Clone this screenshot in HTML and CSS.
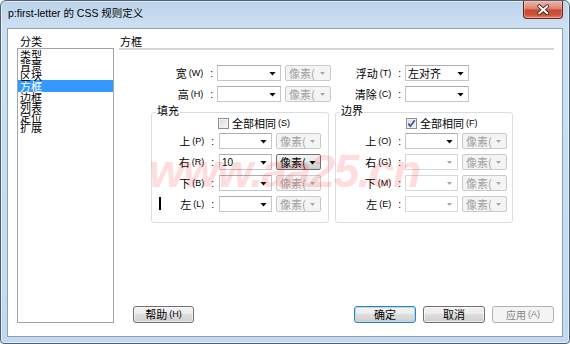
FILE: index.html
```html
<!DOCTYPE html>
<html lang="zh-CN">
<head>
<meta charset="utf-8">
<title>p:first-letter 的 CSS 规则定义</title>
<link rel="stylesheet" href="styles.css">
</head>
<body>
<div class="window">
  <div class="titlebar">
    <div class="title">p:first-letter 的 CSS 规则定义</div>
    <div class="close">
      <svg width="40" height="17" viewBox="0 0 40 17">
        <path d="M16 5 L24.5 12.5 M24.5 5 L16 12.5" stroke="#4a1810" stroke-width="4" stroke-linecap="round"/>
        <path d="M16 5 L24.5 12.5 M24.5 5 L16 12.5" stroke="#ffffff" stroke-width="2.2" stroke-linecap="round"/>
      </svg>
    </div>
  </div>
  <div class="client">
    <div class="cat">
      <div class="cat-label">分类</div>
      <ul class="cat-list">
        <li>类型</li>
        <li>背景</li>
        <li>区块</li>
        <li class="sel">方框</li>
        <li>边框</li>
        <li>列表</li>
        <li>定位</li>
        <li>扩展</li>
      </ul>
    </div>
    <div class="panel">
      <div class="panel-title">方框</div>
      <div class="size-grid">
        <div class="lbl">宽<span class="k">(W)</span><span class="c">:</span></div>
        <div class="combo"><span class="val"></span><i class="arr"></i></div>
        <div class="unit off"><span class="u">像素(</span><i class="arr"></i></div>
        <div class="lbl">浮动<span class="k">(T)</span><span class="c">:</span></div>
        <div class="combo"><span class="val">左对齐</span><i class="arr"></i></div>

        <div class="lbl">高<span class="k">(H)</span><span class="c">:</span></div>
        <div class="combo"><span class="val"></span><i class="arr"></i></div>
        <div class="unit off"><span class="u">像素(</span><i class="arr"></i></div>
        <div class="lbl">清除<span class="k">(C)</span><span class="c">:</span></div>
        <div class="combo"><span class="val"></span><i class="arr"></i></div>
      </div>

      <div class="groups">
        <div class="group padding">
          <div class="legend">填充</div>
          <div class="same"><span class="cb"></span>全部相同<span class="k">(S)</span></div>
          <div class="side-grid">
            <div class="lbl">上<span class="k">(P)</span><span class="c">:</span></div>
            <div class="combo"><span class="val"></span><i class="arr"></i></div>
            <div class="unit off"><span class="u">像素(</span><i class="arr"></i></div>

            <div class="lbl">右<span class="k">(R)</span><span class="c">:</span></div>
            <div class="combo"><span class="val num">10</span><i class="arr"></i></div>
            <div class="unit on"><span class="u">像素(</span><i class="arr"></i></div>

            <div class="lbl">下<span class="k">(B)</span><span class="c">:</span></div>
            <div class="combo"><span class="val"></span><i class="arr"></i></div>
            <div class="unit off"><span class="u">像素(</span><i class="arr"></i></div>

            <div class="lbl">左<span class="k">(L)</span><span class="c">:</span></div>
            <div class="combo"><span class="val"></span><i class="arr"></i></div>
            <div class="unit off"><span class="u">像素(</span><i class="arr"></i></div>
          </div>
        </div>

        <div class="group margin">
          <div class="legend">边界</div>
          <div class="same"><span class="cb checked"><svg width="9" height="9" viewBox="0 0 9 9"><path d="M1.3 4.6 L3.4 7.2 L7.8 1.2" fill="none" stroke="#2f55a8" stroke-width="1.7"/></svg></span>全部相同<span class="k">(F)</span></div>
          <div class="side-grid">
            <div class="lbl">上<span class="k">(O)</span><span class="c">:</span></div>
            <div class="combo"><span class="val"></span><i class="arr"></i></div>
            <div class="unit off"><span class="u">像素(</span><i class="arr"></i></div>

            <div class="lbl">右<span class="k">(G)</span><span class="c">:</span></div>
            <div class="combo off"><span class="val"></span><i class="arr"></i></div>
            <div class="unit off"><span class="u">像素(</span><i class="arr"></i></div>

            <div class="lbl">下<span class="k">(M)</span><span class="c">:</span></div>
            <div class="combo off"><span class="val"></span><i class="arr"></i></div>
            <div class="unit off"><span class="u">像素(</span><i class="arr"></i></div>

            <div class="lbl">左<span class="k">(E)</span><span class="c">:</span></div>
            <div class="combo off"><span class="val"></span><i class="arr"></i></div>
            <div class="unit off"><span class="u">像素(</span><i class="arr"></i></div>
          </div>
        </div>
      </div>

      <div class="buttons">
        <button class="btn help">帮助<span class="k">(H)</span></button>
        <span class="spacer"></span>
        <button class="btn default">确定</button>
        <button class="btn">取消</button>
        <button class="btn" disabled>应用<span class="k">(A)</span></button>
      </div>
    </div>
  </div>
  <div class="watermark">www.aa25.cn</div>
  <div class="ibeam"></div>
</div>
</body>
</html>
```

FILE: styles.css
```css
* { box-sizing: border-box; }
html, body { margin: 0; padding: 0; }
body {
  width: 570px;
  height: 344px;
  overflow: hidden;
  background: #fff;
  font-family: "Noto Sans CJK SC", "Liberation Sans", sans-serif;
  font-size: 11px;
  color: #000;
}

.window {
  position: relative;
  width: 570px;
  height: 344px;
  border: 1px solid #4f6172;
  border-radius: 6px 6px 4px 4px;
  background: linear-gradient(#bcd3eb, #cde0f3 26px, #c4d9ef);
  box-shadow: inset 0 0 0 1px rgba(255, 255, 255, 0.55);
  display: flex;
  flex-direction: column;
  overflow: hidden;
}

.titlebar {
  height: 27px;
  flex: none;
  display: flex;
  align-items: flex-start;
  padding-left: 7px;
}
.title {
  margin-top: 4px;
  line-height: 16px;
  font-family: "Liberation Sans", "Noto Sans CJK SC", sans-serif;
  font-size: 10.5px;
  white-space: nowrap;
}
.close {
  margin-left: auto;
  margin-right: 6px;
  width: 40px;
  height: 18px;
  border: 1px solid #6a2118;
  border-top: 0;
  border-radius: 0 0 4px 4px;
  background: linear-gradient(#ebb4a8, #dc8a77 42%, #c84a33 55%, #cd5339 82%, #e38c73);
  box-shadow: inset 0 0 0 1px rgba(255, 220, 210, 0.35);
  display: flex;
}

.client {
  flex: 1;
  margin: 0 6px 6px;
  border: 1px solid #8b9fb5;
  background: #fff;
  display: flex;
  column-gap: 5px;
  padding: 6px 8px 13px 9px;
}

.cat {
  width: 97px;
  flex: none;
  display: flex;
  flex-direction: column;
}
.cat-label {
  height: 13px;
  line-height: 13px;
  padding-left: 3px;
}
.cat-list {
  flex: 1;
  margin: 0;
  padding: 1px 0 0;
  list-style: none;
  border: 1px solid #a0a6ae;
}
.cat-list li {
  height: 10px;
  line-height: 10px;
  padding-left: 2px;
  white-space: nowrap;
}
.cat-list li.sel {
  height: 12px;
  line-height: 12px;
  background: #3399ff;
  color: #fff;
}

.panel {
  flex: 1;
  display: flex;
  flex-direction: column;
}
.panel-title {
  height: 15px;
  line-height: 13px;
  padding-left: 1px;
  border-bottom: 2px solid #d6d6d6;
}

.size-grid {
  margin-top: 15px;
  display: grid;
  grid-template-columns: 98px 64px 50px 74px 64px;
  grid-auto-rows: 16px;
  row-gap: 5px;
}

.lbl {
  display: flex;
  align-items: center;
  justify-content: flex-end;
  padding-right: 4px;
  white-space: nowrap;
}
.k {
  font-family: "Liberation Sans", sans-serif;
  font-size: 9px;
  margin-left: 2px;
}
.c {
  font-family: "Liberation Sans", sans-serif;
  font-size: 10px;
  margin-left: 7px;
}

.combo {
  display: flex;
  align-items: center;
  border: 1px solid #c4c6cb;
  border-top-color: #abadb3;
  background: #fff;
  padding-left: 2px;
}
.val {
  flex: 1;
  white-space: nowrap;
}
.val.num {
  font-family: "Liberation Sans", sans-serif;
  font-size: 10px;
}
.arr {
  flex: none;
  width: 7px;
  height: 4px;
  margin: 1px 4px 0 0;
  background: #000;
  clip-path: polygon(0 0, 100% 0, 50% 100%);
}
.combo.off {
  border-color: #d6d7da;
}
.combo.off .arr,
.unit.off .arr {
  width: 5px;
  height: 3px;
  margin-right: 5px;
  background: #a8a8a8;
}

.unit {
  margin-left: 4px;
  display: flex;
  align-items: center;
  padding-left: 3px;
  border-radius: 2px;
  white-space: nowrap;
}
.unit .u { flex: 1; }
.unit.off {
  border: 1px solid #c8cacd;
  background: #f4f4f4;
  color: #a2a2a2;
}
.unit.on {
  border: 1px solid #707070;
  background: linear-gradient(#f3f3f3, #ebebeb 50%, #dddddd 50%, #cfcfcf);
}

.groups {
  margin-top: 10px;
  margin-left: 32px;
  display: flex;
  column-gap: 6px;
}
.group {
  width: 178px;
  border: 1px solid #d5dfe5;
  border-radius: 3px;
  padding-bottom: 10px;
}
.legend {
  width: max-content;
  height: 12px;
  line-height: 12px;
  margin: -9px 0 0 4px;
  padding: 0 1px;
  background: #fff;
}
.same {
  margin-top: 2px;
  height: 11px;
  line-height: 11px;
  display: flex;
  align-items: center;
  padding-left: 66px;
  white-space: nowrap;
}
.cb {
  flex: none;
  width: 11px;
  height: 11px;
  margin-right: 3px;
  border: 1px solid #8e8f8f;
  background: linear-gradient(135deg, #d9d9d9, #f8f8f8);
  box-shadow: inset 0 0 0 1px #f2f2f2;
  display: flex;
  align-items: center;
  justify-content: center;
}
.side-grid {
  margin-top: 4px;
  display: grid;
  grid-template-columns: 67px 53px 49px;
  grid-auto-rows: 16px;
  row-gap: 5px;
}
.group.padding .lbl { padding-right: 5px; }
.group.margin .same { padding-left: 70px; }
.group.margin .side-grid { grid-template-columns: 69px 53px 49px; }

.buttons {
  margin-top: auto;
  height: 17px;
  display: flex;
  padding-left: 14px;
}
.spacer { flex: 1; }
.btn {
  width: 62px;
  height: 17px;
  margin: 0;
  padding: 0;
  font-family: "Noto Sans CJK SC", sans-serif;
  font-size: 11px;
  line-height: 1;
  color: #000;
  border: 1px solid #707070;
  border-radius: 3px;
  background: linear-gradient(#f3f3f3, #ebebeb 50%, #dddddd 50%, #cfcfcf);
  box-shadow: inset 0 0 0 1px rgba(255, 255, 255, 0.6);
  display: flex;
  align-items: center;
  justify-content: center;
}
.btn.help { width: 61px; }
.btn + .btn { margin-left: 7px; }
.btn.default {
  border-color: #3c7fb1;
  box-shadow: inset 0 0 0 1px #a9dcf6;
}
.btn:disabled {
  border-color: #adb2b5;
  background: #f4f4f4;
  box-shadow: none;
  color: #838383;
  font-size: 10px;
}

.watermark {
  position: absolute;
  left: 148px;
  top: 147px;
  font-family: "Liberation Sans", sans-serif;
  font-style: italic;
  font-weight: bold;
  font-size: 46px;
  line-height: 1;
  letter-spacing: -1.5px;
  color: rgba(255, 40, 40, 0.18);
  white-space: nowrap;
  pointer-events: none;
}
.ibeam {
  position: absolute;
  left: 158px;
  top: 196px;
  width: 2px;
  height: 13px;
  background: #000;
}
```
